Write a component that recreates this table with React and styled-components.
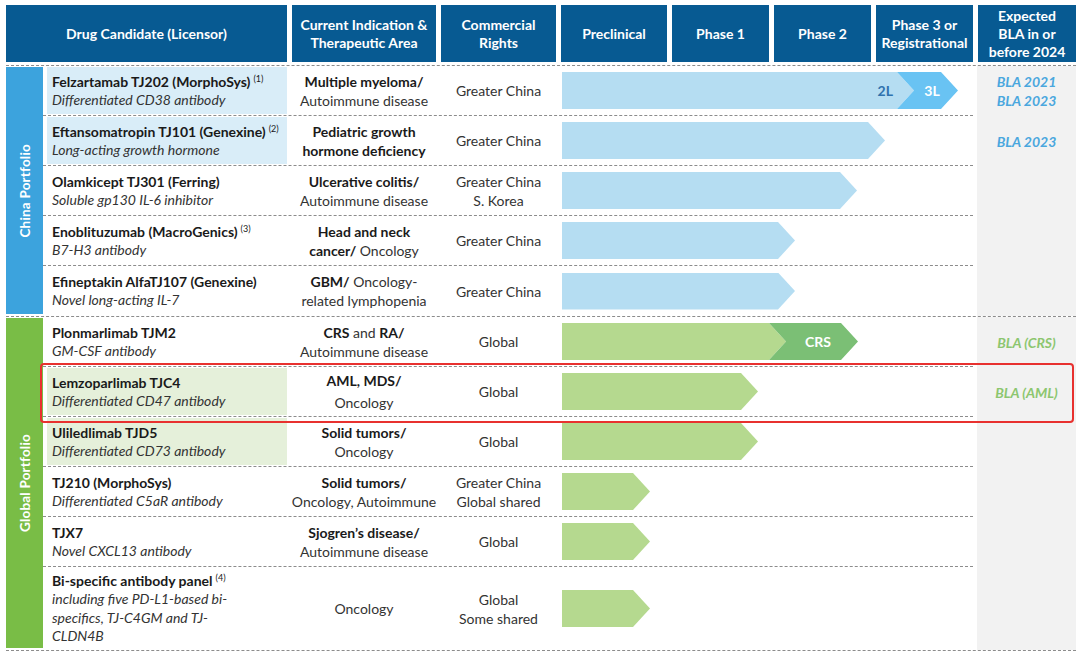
import React from "react";
import styled, { createGlobalStyle, css } from "styled-components";

const FONT = `Lato, "Noto Sans", "Liberation Sans", sans-serif`;

const LIGHT_BLUE = "#b5ddf2";
const DEEP_BLUE = "#69c3f3";
const LIGHT_GREEN = "#b5d98f";
const DEEP_GREEN = "#7bbf75";

const GlobalStyle = createGlobalStyle`
  html, body {
    margin: 0;
    padding: 0;
    background: #ffffff;
  }
  body {
    font-family: ${FONT};
  }
`;

const B = styled.b`
  font-weight: 700;
  color: #1a1a1a;
`;

const Sup = styled.sup`
  font-size: 9px;
  font-weight: 400;
  vertical-align: 5px;
  line-height: 0;
  margin-left: 3px;
`;

const header = [
  "Drug Candidate (Licensor)",
  <>Current Indication &amp;<br />Therapeutic Area</>,
  <>Commercial<br />Rights</>,
  "Preclinical",
  "Phase 1",
  "Phase 2",
  <>Phase 3 or<br />Registrational</>,
  <>Expected<br />BLA in or<br />before 2024</>,
];

const china = [
  {
    name: "Felzartamab TJ202 (MorphoSys)",
    note: "(1)",
    desc: "Differentiated CD38 antibody",
    tone: "blue",
    ind: <><B>Multiple myeloma/</B><br />Autoimmune disease</>,
    rights: <>Greater China</>,
    segs: [
      { w: 352, bg: LIGHT_BLUE, label: "2L", fg: "#2f72ad", end: true },
      { w: 61, bg: DEEP_BLUE, label: "3L", fg: "#ffffff", notch: true },
    ],
    bla: <>BLA 2021<br />BLA 2023</>,
  },
  {
    name: "Eftansomatropin TJ101 (Genexine)",
    note: "(2)",
    desc: "Long-acting growth hormone",
    tone: "blue",
    ind: <><B>Pediatric growth</B><br /><B>hormone deficiency</B></>,
    rights: <>Greater China</>,
    segs: [{ w: 323, bg: LIGHT_BLUE }],
    bla: <>BLA 2023</>,
  },
  {
    name: "Olamkicept TJ301 (Ferring)",
    desc: "Soluble gp130 IL-6 inhibitor",
    ind: <><B>Ulcerative colitis/</B><br />Autoimmune disease</>,
    rights: <>Greater China<br />S. Korea</>,
    segs: [{ w: 295, bg: LIGHT_BLUE }],
  },
  {
    name: "Enoblituzumab (MacroGenics)",
    note: "(3)",
    desc: "B7-H3 antibody",
    ind: <><B>Head and neck</B><br /><B>cancer/</B> Oncology</>,
    rights: <>Greater China</>,
    segs: [{ w: 233, bg: LIGHT_BLUE }],
  },
  {
    name: "Efineptakin AlfaTJ107 (Genexine)",
    desc: "Novel long-acting IL-7",
    ind: <><B>GBM/</B> Oncology-<br />related lymphopenia</>,
    rights: <>Greater China</>,
    segs: [{ w: 233, bg: LIGHT_BLUE }],
  },
];

const global = [
  {
    name: "Plonmarlimab TJM2",
    desc: "GM-CSF antibody",
    ind: <><B>CRS</B> and <B>RA/</B><br />Autoimmune disease</>,
    rights: <>Global</>,
    segs: [
      { w: 224, bg: LIGHT_GREEN },
      { w: 89, bg: DEEP_GREEN, label: "CRS", fg: "#ffffff", notch: true },
    ],
    bla: <>BLA (CRS)</>,
  },
  {
    name: "Lemzoparlimab TJC4",
    desc: "Differentiated CD47 antibody",
    tone: "green",
    flag: true,
    loose: true,
    ind: <><B>AML, MDS/</B><br />Oncology</>,
    rights: <>Global</>,
    segs: [{ w: 196, bg: LIGHT_GREEN }],
    bla: <>BLA (AML)</>,
  },
  {
    name: "Uliledlimab TJD5",
    desc: "Differentiated CD73 antibody",
    tone: "green",
    ind: <><B>Solid tumors/</B><br />Oncology</>,
    rights: <>Global</>,
    segs: [{ w: 196, bg: LIGHT_GREEN }],
  },
  {
    name: "TJ210 (MorphoSys)",
    desc: "Differentiated C5aR antibody",
    ind: <><B>Solid tumors/</B><br />Oncology, Autoimmune</>,
    rights: <>Greater China<br />Global shared</>,
    segs: [{ w: 88, bg: LIGHT_GREEN }],
  },
  {
    name: "TJX7",
    desc: "Novel CXCL13 antibody",
    ind: <><B>Sjogren’s disease/</B><br />Autoimmune disease</>,
    rights: <>Global</>,
    segs: [{ w: 88, bg: LIGHT_GREEN }],
  },
  {
    name: "Bi-specific antibody panel",
    note: "(4)",
    desc: <>including five PD-L1-based bi-<br />specifics, TJ-C4GM and TJ-<br />CLDN4B</>,
    ind: <>Oncology</>,
    rights: <>Global<br />Some shared</>,
    segs: [{ w: 88, bg: LIGHT_GREEN }],
    height: 83,
  },
];

function App() {
  return (
    <>
      <GlobalStyle />
      <Page>
        <Header>
          {header.map((h, i) => (
            <HeadCell key={i}>
              <div>{h}</div>
            </HeadCell>
          ))}
        </Header>
        <Group>
          <SideBar $color="#3ca3dd">
            <SideLabel>China Portfolio</SideLabel>
          </SideBar>
          <Rows>
            {china.map((r) => (
              <DrugRow key={r.name} row={r} blaColor="#4aa7de" />
            ))}
          </Rows>
        </Group>
        <Group>
          <SideBar $color="#79bd46">
            <SideLabel>Global Portfolio</SideLabel>
          </SideBar>
          <Rows>
            {global.map((r) => (
              <DrugRow key={r.name} row={r} blaColor="#8cc66f" />
            ))}
          </Rows>
        </Group>
      </Page>
    </>
  );
}

function DrugRow({ row, blaColor }) {
  return (
    <Row $h={row.height || 50} $flag={row.flag}>
      <RowMain>
        <DrugCell $tone={row.tone}>
          <DrugName>
            {row.name}
            {row.note && <Sup>{row.note}</Sup>}
          </DrugName>
          <DrugDesc>{row.desc}</DrugDesc>
        </DrugCell>
        <TextCell $loose={row.loose}>
          <div>{row.ind}</div>
        </TextCell>
        <TextCell>
          <div>{row.rights}</div>
        </TextCell>
        <Track>
          {row.segs.map((s, i) => (
            <Seg
              key={i}
              $w={s.w}
              $bg={s.bg}
              $fg={s.fg}
              $notch={s.notch}
              $end={s.end}
            >
              {s.label}
            </Seg>
          ))}
        </Track>
      </RowMain>
      <BlaCell $color={blaColor}>
        <div>{row.bla}</div>
      </BlaCell>
    </Row>
  );
}

const Page = styled.div`
  width: 1080px;
  height: 657px;
  box-sizing: border-box;
  padding: 5px 4px 0 6px;
  overflow: hidden;
  font-family: ${FONT};
  font-size: 14px;
  color: #333333;
`;

const Header = styled.div`
  display: grid;
  grid-template-columns: 281px 144px 115px 106px 97px 97px 97px 98px;
  column-gap: 5px;
  height: 57px;
  padding-bottom: 3px;
  border-bottom: 1px dashed #8c8c8c;
`;

const HeadCell = styled.div`
  background: #075a92;
  color: #ffffff;
  font-weight: 700;
  font-size: 14px;
  line-height: 18px;
  display: flex;
  align-items: center;
  justify-content: center;
  text-align: center;
  white-space: nowrap;
`;

const Group = styled.div`
  display: flex;
  border-bottom: 1px dashed #8c8c8c;
`;

const SideBar = styled.div`
  width: 37px;
  flex: none;
  margin: 1px 0 2px;
  background: ${(p) => p.$color};
  display: flex;
  align-items: center;
  justify-content: center;
`;

const SideLabel = styled.span`
  writing-mode: vertical-rl;
  transform: rotate(180deg);
  color: #ffffff;
  font-weight: 700;
  font-size: 13.5px;
  letter-spacing: 0.2px;
`;

const Rows = styled.div`
  flex: 1;
  display: flex;
  flex-direction: column;
`;

const RowMain = styled.div`
  flex: 1;
  display: grid;
  grid-template-columns: 244px 144px 115px 1fr;
  column-gap: 5px;
  margin-right: 4px;
  border-bottom: 1px dashed #8c8c8c;
`;

const Row = styled.div`
  display: flex;
  height: ${(p) => p.$h}px;
  position: relative;

  &:last-child ${RowMain} {
    border-bottom: none;
  }

  ${(p) =>
    p.$flag &&
    css`
      &::after {
        content: "";
        position: absolute;
        z-index: 2;
        left: -3px;
        right: 2px;
        top: -4px;
        bottom: -6px;
        border: 2px solid #e8312f;
        border-radius: 4px;
        pointer-events: none;
      }
    `}
`;

const DrugCell = styled.div`
  margin: 1px 0 1px 4px;
  padding-left: 5px;
  background: ${(p) =>
    p.$tone === "blue" ? "#d9edf8" : p.$tone === "green" ? "#e5f0da" : "transparent"};
  display: flex;
  flex-direction: column;
  justify-content: center;
  line-height: 19px;
`;

const DrugName = styled.div`
  font-weight: 700;
  color: #1a1a1a;
`;

const DrugDesc = styled.div`
  font-style: italic;
  color: #333333;
  line-height: 18.5px;
`;

const TextCell = styled.div`
  display: flex;
  align-items: center;
  justify-content: center;
  text-align: center;
  white-space: nowrap;
  line-height: ${(p) => (p.$loose ? "22px" : "19px")};
  color: #333333;
`;

const Track = styled.div`
  display: flex;
  align-items: center;
  padding-left: 1px;
`;

const Seg = styled.div`
  flex: none;
  width: ${(p) => p.$w}px;
  height: 37px;
  background: ${(p) => p.$bg};
  color: ${(p) => p.$fg || "#ffffff"};
  font-weight: 700;
  font-size: 14px;
  display: flex;
  align-items: center;
  justify-content: ${(p) => (p.$end ? "flex-end" : "center")};
  box-sizing: border-box;
  padding: ${(p) => (p.$end ? "0 21px 0 0" : p.$notch ? "0 8px 0 17px" : "0")};
  margin-left: ${(p) => (p.$notch ? "-17px" : "0")};
  clip-path: ${(p) =>
    p.$notch
      ? "polygon(0 0, calc(100% - 17px) 0, 100% 50%, calc(100% - 17px) 100%, 0 100%, 17px 50%)"
      : "polygon(0 0, calc(100% - 17px) 0, 100% 50%, calc(100% - 17px) 100%, 0 100%)"};
`;

const BlaCell = styled.div`
  width: 99px;
  flex: none;
  background: #f2f2f2;
  color: ${(p) => p.$color};
  font-weight: 700;
  font-style: italic;
  font-size: 14px;
  line-height: 19px;
  display: flex;
  align-items: center;
  justify-content: center;
  text-align: center;
`;

export default App;
